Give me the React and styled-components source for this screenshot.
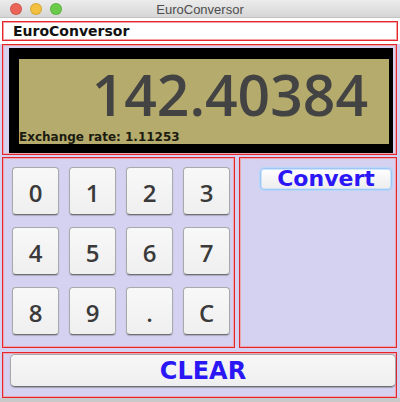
import React from "react";
import styled, { createGlobalStyle } from "styled-components";

const GlobalStyle = createGlobalStyle`
  html, body {
    margin: 0;
    padding: 0;
    background: #d4d2f0;
    overflow: hidden;
  }
`;

const Window = styled.div`
  width: 400px;
  height: 402px;
  display: flex;
  flex-direction: column;
  background: #d4d2f0;
  font-family: "DejaVu Sans", "Liberation Sans", sans-serif;
  overflow: hidden;
`;

const TitleBar = styled.div`
  height: 18px;
  flex: none;
  display: flex;
  align-items: center;
  position: relative;
  background: linear-gradient(#ececec, #d6d6d6);
  border-bottom: 1px solid #c2c2c2;
  box-sizing: border-box;
`;

const Lights = styled.div`
  display: flex;
  gap: 8px;
  padding-left: 10px;
`;

const Light = styled.span`
  width: 12px;
  height: 12px;
  border-radius: 50%;
  background: ${(p) => p.color};
  box-shadow: inset 0 0 0 1px rgba(0, 0, 0, 0.12);
`;

const Title = styled.div`
  position: absolute;
  left: 0;
  right: 0;
  top: 2px;
  text-align: center;
  font-family: "Liberation Sans", Arial, sans-serif;
  font-size: 13px;
  color: #4d4d4d;
`;

const HeaderRow = styled.div`
  background: #fff;
  padding: 3px 2px 3px 2px;
`;

const HeaderBox = styled.div`
  height: 20px;
  box-sizing: border-box;
  border: 1px solid #e2262c;
  box-shadow: inset 0 0 0 1px #f3a0a3;
  background: #fff;
  padding-left: 10px;
  font-weight: bold;
  font-size: 14px;
  line-height: 18px;
  color: #111;
`;

const Panel = styled.div`
  border: 1px solid #e2262c;
  box-shadow: inset 0 0 0 1px #eea6ae;
  box-sizing: border-box;
`;

const DisplayPanel = styled(Panel)`
  margin: 0 3px 0 2px;
  height: 111px;
  padding: 3px 3px 1px 6px;
  display: flex;
`;

const Screen = styled.div`
  flex: 1;
  background: #000;
  padding: 11px 4px 9px 10px;
  display: flex;
`;

const Lcd = styled.div`
  flex: 1;
  background: #b5ab6c;
  display: flex;
  flex-direction: column;
`;

const Amount = styled.div`
  text-align: right;
  padding-right: 21px;
  font-family: "Open Sans", "DejaVu Sans", sans-serif;
  font-weight: 600;
  font-size: 57px;
  line-height: 66px;
  margin-top: 2px;
  color: #434343;
`;

const Rate = styled.div`
  margin-top: auto;
  font-size: 12px;
  font-weight: bold;
  color: #1b1b10;
  line-height: 12px;
  padding-bottom: 1px;
`;

const MiddleRow = styled.div`
  display: flex;
  gap: 4px;
  margin: 2px 3px 0 2px;
  height: 191px;
`;

const KeypadPanel = styled(Panel)`
  width: 233px;
  padding: 9px 0 0 9px;
  display: grid;
  grid-template-columns: repeat(4, 47px);
  grid-template-rows: repeat(3, 48px);
  column-gap: 10px;
  row-gap: 12px;
`;

const Key = styled.button`
  all: unset;
  box-sizing: border-box;
  width: 47px;
  height: 48px;
  display: flex;
  align-items: center;
  justify-content: center;
  padding-top: 3px;
  border-radius: 4px;
  background: linear-gradient(#f8f8f8, #efefef);
  border: 1px solid #a9a9a9;
  border-bottom-color: #6f6f6f;
  box-shadow: 0 1px 1px rgba(0, 0, 0, 0.2);
  font-family: "Open Sans", "DejaVu Sans", sans-serif;
  font-weight: 600;
  font-size: 24px;
  color: #3a3a3a;
`;

const ActionPanel = styled(Panel)`
  flex: 1;
  display: flex;
  justify-content: flex-end;
  align-items: flex-start;
  padding: 10px 4px 0 0;
`;

const ConvertButton = styled.button`
  all: unset;
  box-sizing: border-box;
  width: 132px;
  height: 22px;
  display: flex;
  align-items: center;
  justify-content: center;
  border-radius: 4px;
  background: linear-gradient(#ffffff, #ececec);
  border: 1px solid #9fc6f5;
  box-shadow: 0 0 0 1px #b6d6fa, inset 0 0 0 1px #cfe3fb;
  font-family: "DejaVu Sans", sans-serif;
  font-weight: bold;
  font-size: 22px;
  line-height: 20px;
  color: #2b16f6;
`;

const BottomPanel = styled(Panel)`
  margin: 4px 3px 0 2px;
  height: 46px;
  padding: 1px 0 0 7px;
`;

const ClearButton = styled.button`
  all: unset;
  box-sizing: border-box;
  width: 386px;
  height: 33px;
  display: flex;
  align-items: center;
  justify-content: center;
  padding-top: 1px;
  border-radius: 5px;
  background: linear-gradient(#f7f7f7, #efefef);
  border: 1px solid #a9a9a9;
  border-bottom-color: #6f6f6f;
  box-shadow: 0 1px 1px rgba(0, 0, 0, 0.25);
  font-family: "DejaVu Sans", sans-serif;
  font-weight: bold;
  font-size: 24px;
  color: #2b16f6;
`;

const BelowStrip = styled.div`
  flex: 1;
  background: #c9c9c9;
`;

const keys = ["0", "1", "2", "3", "4", "5", "6", "7", "8", "9", ".", "C"];

export default function App() {
  return (
    <Window>
      <GlobalStyle />
      <TitleBar>
        <Lights>
          <Light color="#ec6559" />
          <Light color="#f2bf3e" />
          <Light color="#6acb4a" />
        </Lights>
        <Title>EuroConversor</Title>
      </TitleBar>
      <HeaderRow>
        <HeaderBox>EuroConversor</HeaderBox>
      </HeaderRow>
      <DisplayPanel>
        <Screen>
          <Lcd>
            <Amount>142.40384</Amount>
            <Rate>Exchange rate: 1.11253</Rate>
          </Lcd>
        </Screen>
      </DisplayPanel>
      <MiddleRow>
        <KeypadPanel>
          {keys.map((k) => (
            <Key key={k}>{k}</Key>
          ))}
        </KeypadPanel>
        <ActionPanel>
          <ConvertButton>Convert</ConvertButton>
        </ActionPanel>
      </MiddleRow>
      <BottomPanel>
        <ClearButton>CLEAR</ClearButton>
      </BottomPanel>
      <BelowStrip />
    </Window>
  );
}
